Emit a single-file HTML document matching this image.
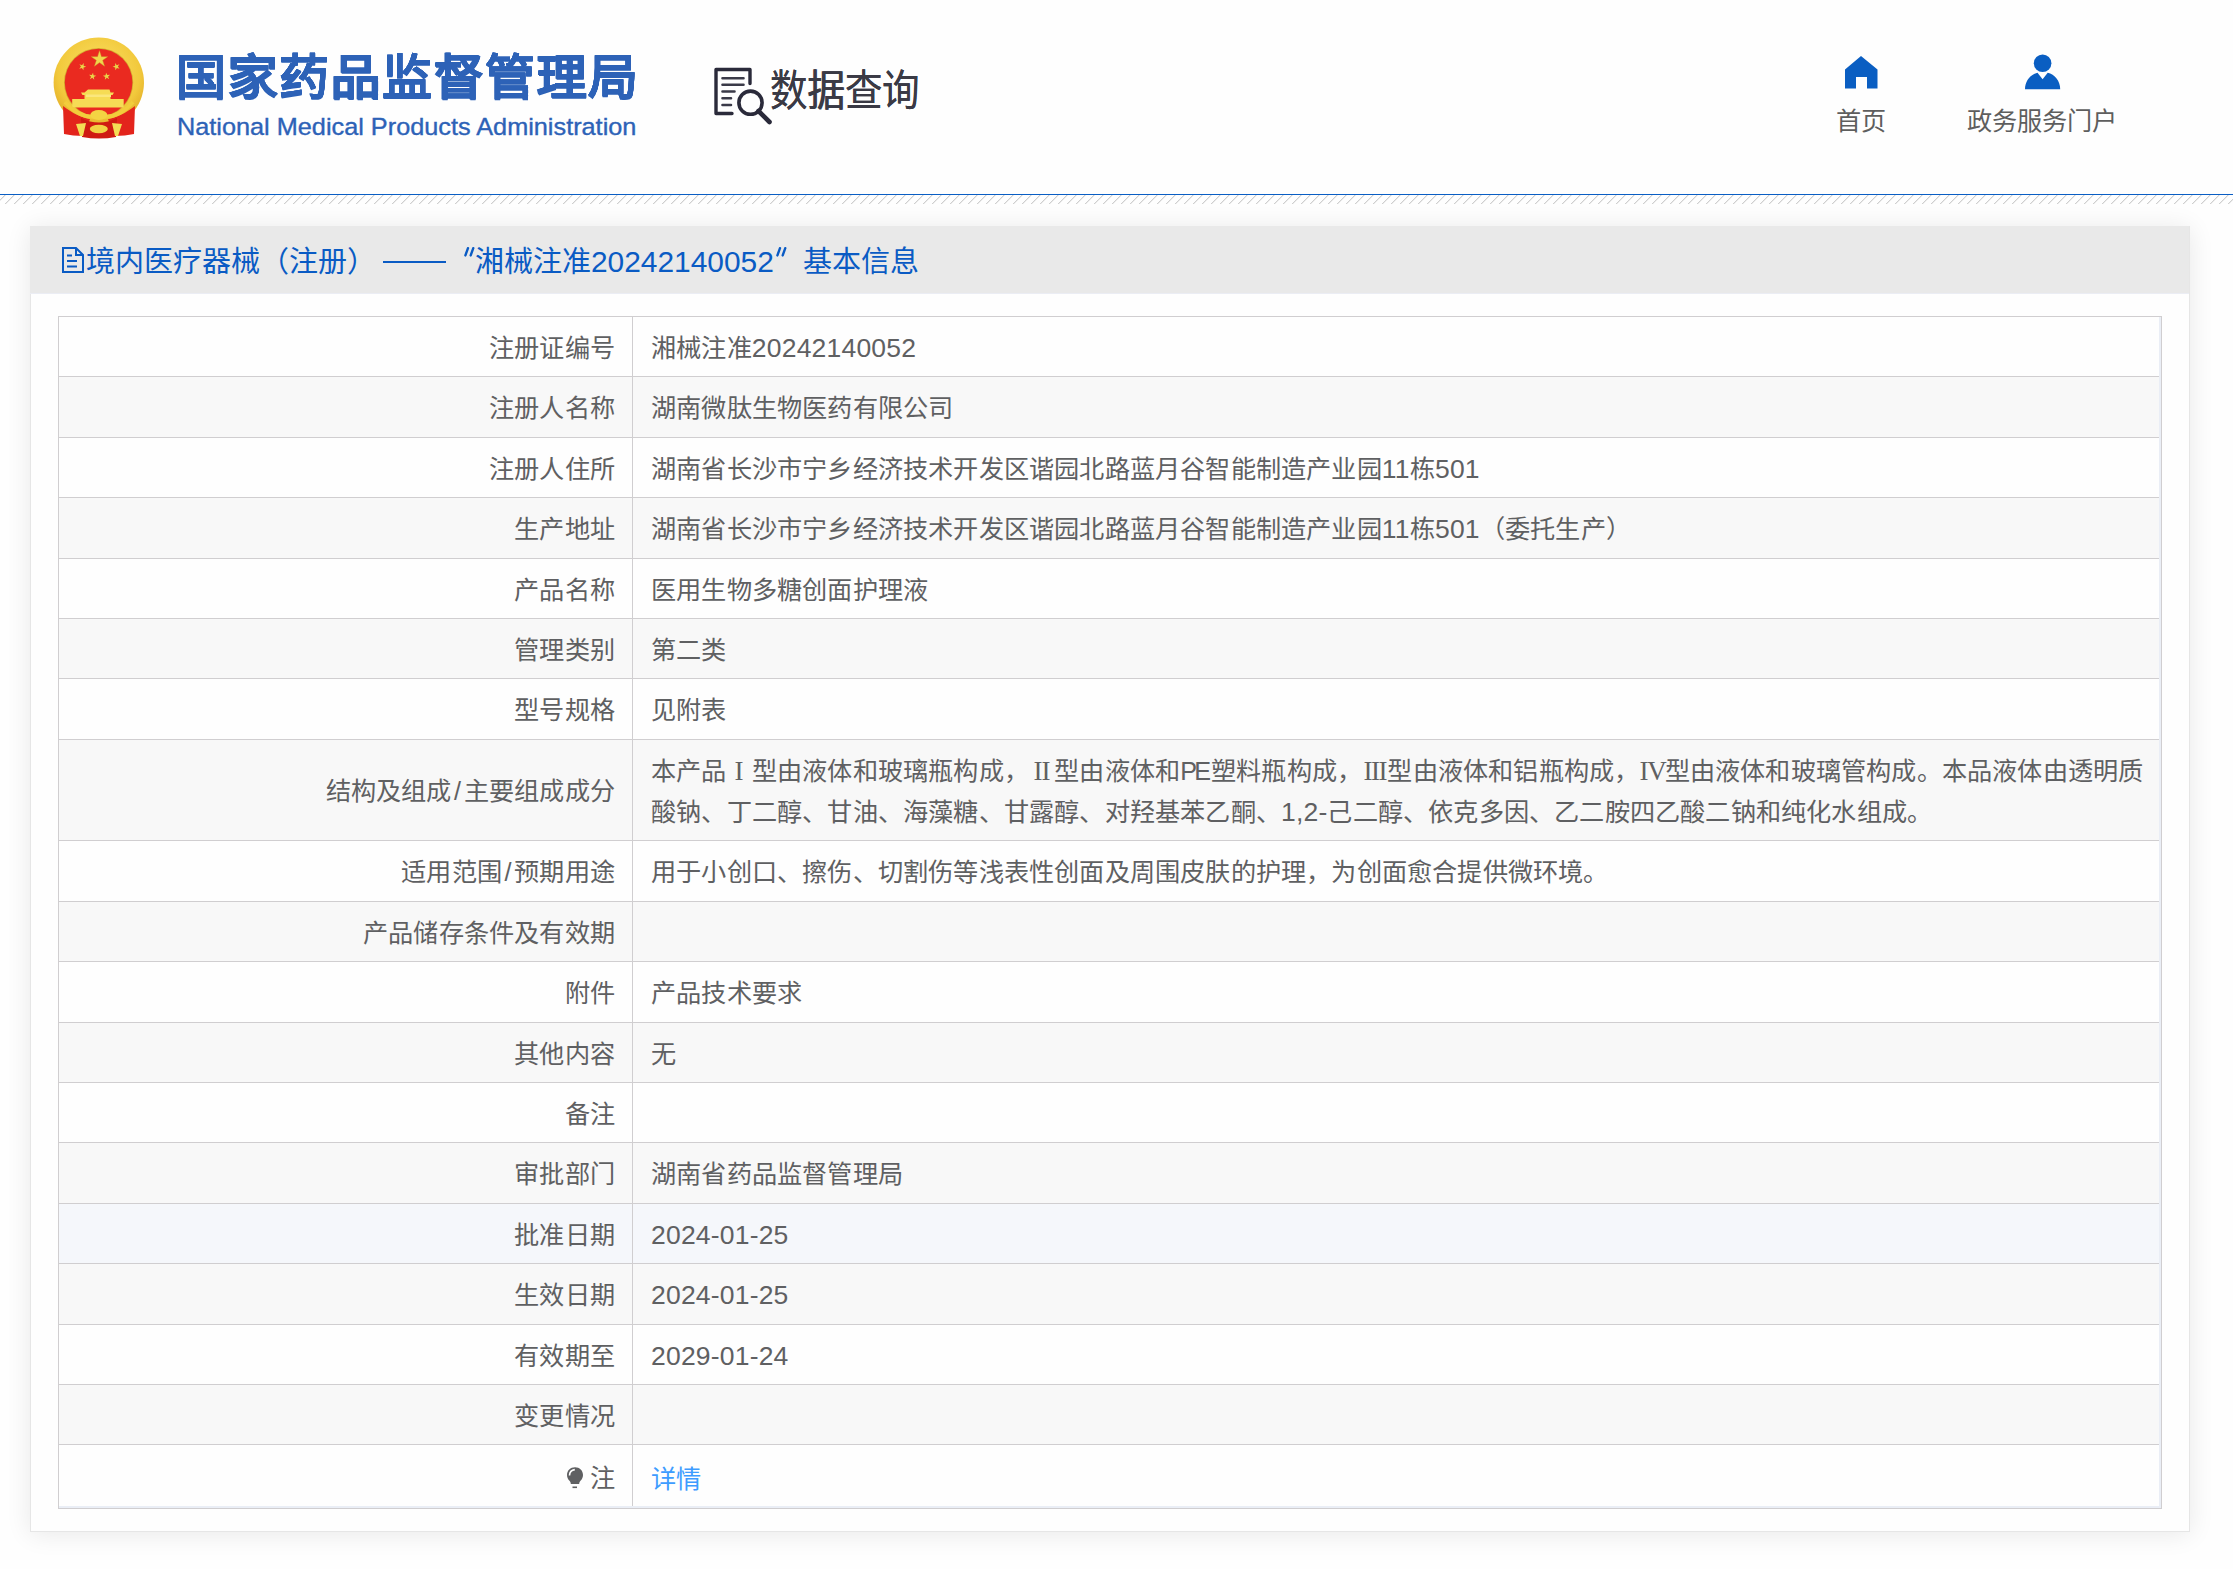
<!DOCTYPE html>
<html lang="zh-CN"><head><meta charset="utf-8">
<style>
html,body{margin:0;padding:0;background:#fefefe;}
body{width:2233px;height:1569px;overflow:hidden;position:relative;font-family:"Liberation Sans",sans-serif;}
.abs{position:absolute;}
#hline{position:absolute;left:0;top:194px;width:2233px;height:1px;background:#0a5ec4;}
#panel{position:absolute;left:30px;top:226px;width:2160px;height:1306px;box-sizing:border-box;border:1px solid #e6e6e6;background:#fefefe;box-shadow:0 2px 24px rgba(0,0,0,0.09);}
#ptitle{position:absolute;left:30px;top:226px;width:2159px;height:67px;background:#e9e9e9;border-bottom:1px solid #ebedf4;}
.tt{position:absolute;top:242px;height:40px;line-height:40px;font-size:29px;color:#0a5bc4;white-space:nowrap;}
.row{position:absolute;left:59px;width:2100px;}
.hl{position:absolute;left:58px;width:2101px;height:1px;background:#d0ced0;}
#vl{position:absolute;left:632px;top:316px;width:1px;height:1192px;background:#d0ced0;}
#tb{position:absolute;left:58px;top:316px;width:2102px;height:1191px;border:1px solid #d0ced0;box-sizing:content-box;}
.lab{position:absolute;right:1618px;height:40px;line-height:40px;font-size:25.2px;letter-spacing:0.2px;color:#5f6062;white-space:nowrap;text-align:right;}
.val{position:absolute;left:651px;height:40px;line-height:40px;font-size:25.2px;letter-spacing:0.2px;color:#5f6062;white-space:nowrap;}
.n{font-size:26.5px;letter-spacing:0.2px;}
.rn{font-family:"Liberation Serif",serif;display:inline-block;width:25.2px;text-align:center;font-size:27px;}
.lnk{color:#3d9cff;position:relative;top:1px}
.bulb{vertical-align:-3px;margin-right:4px;position:relative;left:-2px}
.nav{position:absolute;font-size:25.2px;color:#5e5e5e;white-space:nowrap;line-height:30px;}
</style></head><body>
<div class='abs' style='left:0;top:0;width:2233px;height:194px;background:#fefefe'></div>

<svg class='abs' style='left:48px;top:32px' width='104' height='110' viewBox='0 0 104 110'>
 <defs>
  <radialGradient id='gold' cx='50%' cy='40%' r='60%'><stop offset='0' stop-color='#fbe46a'/><stop offset='0.75' stop-color='#f2c93c'/><stop offset='1' stop-color='#e2ad28'/></radialGradient>
 </defs>
 <circle cx='50.8' cy='50.6' r='45.2' fill='url(#gold)'/>
 <circle cx='50.6' cy='50.5' r='34.6' fill='#b98a1c' opacity='0.55'/>
 <circle cx='50.6' cy='50.5' r='33.8' fill='#ea2a20'/>
 <polygon fill='#f1d64c' stroke='#c9a42a' stroke-width='0.4' points='51.50,18.70 53.43,24.64 59.68,24.64 54.62,28.32 56.55,34.26 51.50,30.59 46.45,34.26 48.38,28.32 43.32,24.64 49.57,24.64'/>
 <g fill='#e9d448'>
  <polygon points='35.70,31.03 35.60,33.79 38.20,34.73 35.54,35.49 35.45,38.25 33.90,35.96 31.25,36.72 32.95,34.55 31.41,32.26 34.00,33.20'/><polygon points='67.10,31.03 68.80,33.20 71.39,32.26 69.85,34.55 71.55,36.72 68.90,35.96 67.35,38.25 67.26,35.49 64.60,34.73 67.20,33.79'/><polygon points='45.03,40.64 45.51,43.36 48.24,43.74 45.80,45.04 46.28,47.76 44.30,45.84 41.86,47.13 43.07,44.65 41.08,42.73 43.82,43.12'/><polygon points='58.07,40.64 59.28,43.12 62.02,42.73 60.03,44.65 61.24,47.13 58.80,45.84 56.82,47.76 57.30,45.04 54.86,43.74 57.59,43.36'/>
 </g>
 <path fill='#f6dc55' d='M40 57.5h21.5l1 3h3.5l-1.5 2.5h-2v4h13.2v8.5H24.2v-8.5h12.3v-4h-2l-1.5-2.5h3.5z'/>
 <path fill='#fbe77c' d='M38 62.5h25v2.5H38z'/>
 <path fill='#e3241c' d='M15 74 C24 81 34 86 42 87 L36 104 C28 104 22 103 16 102 Z'/>
 <path fill='#e3241c' d='M87 74 C78 81 68 86 60 87 L66 104 C74 104 80 103 86 102 Z'/>
 <path fill='#cf1a12' d='M33 86 Q51 95 69 86 L68 105 Q51 108 34 105 Z'/>
 <path fill='none' stroke='#f2cd3c' stroke-width='4' d='M17 70 Q33 88 51 84 Q69 88 85 70'/>
 <ellipse cx='50.8' cy='83' rx='8.5' ry='5' fill='#f4d443'/>
 <path fill='#f4dd55' d='M28 92 L38 91 L35 104 L32 104 Z M74 92 L64 91 L67 104 L70 104 Z'/>
 <ellipse cx='50.8' cy='97' rx='9' ry='4.2' fill='#f2d245'/>
</svg>

<div class='abs' style='left:176px;top:49.5px;font-size:50px;font-weight:900;transform:scaleY(0.945);transform-origin:0 0;text-shadow:0.45px 0 0 #2d62b7,-0.45px 0 0 #2d62b7,0 0.45px 0 #2d62b7,0 -0.45px 0 #2d62b7;color:#2d62b7;line-height:60px;white-space:nowrap;letter-spacing:1.5px'>国家药品监督管理局</div>
<div class='abs' style='left:177px;top:111.5px;font-size:23.7px;color:#2d62b7;line-height:30px;white-space:nowrap;transform:scaleX(1.067);transform-origin:0 0;-webkit-text-stroke:0.35px #2d62b7'>National Medical Products Administration</div>
<svg class='abs' style='left:708px;top:62px' width='70' height='66' viewBox='0 0 70 66'>
 <path d='M24 51.5H8V7.5h34v14' fill='none' stroke='#2a2a3a' stroke-width='3.4' stroke-linejoin='round' stroke-linecap='round'/>
 <g stroke='#3a3a48' stroke-width='2.6' stroke-linecap='round'><path d='M14.5 16.2h21M14.5 22.7h21M14.5 29.5h12M14.5 36.2h8.5M14.5 43h8.5'/></g>
 <circle cx='42.5' cy='40.7' r='11.6' fill='none' stroke='#2a2a3a' stroke-width='3.6'/>
 <path d='M50.5 49l11 11' stroke='#2a2a3a' stroke-width='4.6' stroke-linecap='round'/>
</svg>
<div class='abs' style='left:770px;top:65px;font-size:43.2px;color:#3a3a45;text-shadow:0.3px 0 0 #3a3a45;line-height:52px;white-space:nowrap;transform:scaleX(0.869);transform-origin:0 0'>数据查询</div>
<svg class='abs' style='left:1845px;top:56px' width='33' height='33' viewBox='0 0 33 33'><path d='M16 0L32.5 13.5V32.5H22V21H11V32.5H0V13.5Z' fill='#0a5ec2'/></svg>
<svg class='abs' style='left:2025px;top:54px' width='36' height='36' viewBox='0 0 36 36'><circle cx='17.6' cy='9.3' r='8.8' fill='#0a5ec2'/><path d='M0 35.2C0 27 5.5 20.2 12.5 18.7L17.6 25.3L22.7 18.7C29.7 20.2 35.2 27 35.2 35.2Z' fill='#0a5ec2'/></svg>
<div class='nav' style='left:1836px;top:105.5px'>首页</div>
<div class='nav' style='left:1967px;top:105.5px'>政务服务门户</div>
<div id='hline'></div>
<svg class='abs' style='left:0;top:195px' width='2233' height='9'>
 <defs><pattern id='st' width='9' height='9' patternUnits='userSpaceOnUse'><g><rect x='4' y='0' width='1' height='1' fill='#cfcfcf'/><rect x='5' y='0' width='1' height='1' fill='#ececec'/><rect x='3' y='1' width='1' height='1' fill='#cfcfcf'/><rect x='4' y='1' width='1' height='1' fill='#ececec'/><rect x='2' y='2' width='1' height='1' fill='#cfcfcf'/><rect x='3' y='2' width='1' height='1' fill='#ececec'/><rect x='1' y='3' width='1' height='1' fill='#cfcfcf'/><rect x='2' y='3' width='1' height='1' fill='#ececec'/><rect x='0' y='4' width='1' height='1' fill='#cfcfcf'/><rect x='1' y='4' width='1' height='1' fill='#ececec'/><rect x='8' y='5' width='1' height='1' fill='#cfcfcf'/><rect x='0' y='5' width='1' height='1' fill='#ececec'/><rect x='7' y='6' width='1' height='1' fill='#cfcfcf'/><rect x='8' y='6' width='1' height='1' fill='#ececec'/><rect x='6' y='7' width='1' height='1' fill='#cfcfcf'/><rect x='7' y='7' width='1' height='1' fill='#ececec'/><rect x='5' y='8' width='1' height='1' fill='#cfcfcf'/><rect x='6' y='8' width='1' height='1' fill='#ececec'/></g></pattern></defs>
 <rect width='2233' height='9' fill='url(#st)' shape-rendering='crispEdges'/>
</svg>
<div id='panel'></div>
<div id='ptitle'></div>
<svg class='abs' style='left:60px;top:245px' width='26' height='30' viewBox='0 0 26 30'>
 <path d='M3 3H16L23 10V27H3Z' fill='none' stroke='#0a5bc4' stroke-width='2'/>
 <path d='M16 3V10H23' fill='none' stroke='#0a5bc4' stroke-width='2'/>
 <path d='M7 10.5h5M7 16h10M7 21.5h10' stroke='#0a5bc4' stroke-width='2'/>
</svg>
<div class='tt' style='left:86px'>境内医疗器械（注册）</div>
<div class='abs' style='left:383px;top:261px;width:63px;height:2px;background:#0a5bc4'></div>
<div class='tt' style='left:475px'>湘械注准<span style='font-size:29.9px;letter-spacing:0px'>20242140052</span></div>
<svg class='abs' style='left:462px;top:247px' width='14' height='10' viewBox='0 0 14 10'><path d='M6 1.2L3.4 8.4M11.3 1.2L8.7 8.4' stroke='#0a5bc4' stroke-width='2.4' stroke-linecap='round'/></svg>
<svg class='abs' style='left:774px;top:247px' width='14' height='10' viewBox='0 0 14 10'><path d='M6 1.2L3.4 8.4M11.3 1.2L8.7 8.4' stroke='#0a5bc4' stroke-width='2.4' stroke-linecap='round'/></svg>
<div class='tt' style='left:803px'>基本信息</div>
<div id='tb'></div>
<div class='row' style='top:317px;height:59px;background:#fefefe'></div><div class='hl' style='top:316px'></div><div class='lab' style='top:327.5px'>注册证编号</div><div class='val' style='top:327.5px'>湘械注准<span class='n'>20242140052</span></div><div class='row' style='top:377px;height:60px;background:#f8f8f8'></div><div class='hl' style='top:376px'></div><div class='lab' style='top:388.0px'>注册人名称</div><div class='val' style='top:388.0px'>湖南微肽生物医药有限公司</div><div class='row' style='top:438px;height:59px;background:#fefefe'></div><div class='hl' style='top:437px'></div><div class='lab' style='top:448.5px'>注册人住所</div><div class='val' style='top:448.5px'>湖南省长沙市宁乡经济技术开发区谐园北路蓝月谷智能制造产业园<span class='n'>11</span>栋<span class='n'>501</span></div><div class='row' style='top:498px;height:60px;background:#f8f8f8'></div><div class='hl' style='top:497px'></div><div class='lab' style='top:509.0px'>生产地址</div><div class='val' style='top:509.0px'>湖南省长沙市宁乡经济技术开发区谐园北路蓝月谷智能制造产业园<span class='n'>11</span>栋<span class='n'>501</span>（委托生产）</div><div class='row' style='top:559px;height:59px;background:#fefefe'></div><div class='hl' style='top:558px'></div><div class='lab' style='top:569.5px'>产品名称</div><div class='val' style='top:569.5px'>医用生物多糖创面护理液</div><div class='row' style='top:619px;height:59px;background:#f8f8f8'></div><div class='hl' style='top:618px'></div><div class='lab' style='top:629.5px'>管理类别</div><div class='val' style='top:629.5px'>第二类</div><div class='row' style='top:679px;height:60px;background:#fefefe'></div><div class='hl' style='top:678px'></div><div class='lab' style='top:690.0px'>型号规格</div><div class='val' style='top:690.0px'>见附表</div><div class='row' style='top:740px;height:100px;background:#f8f8f8'></div><div class='hl' style='top:739px'></div><div class='lab' style='top:771.0px'>结构及组成<span style='margin:0 2.5px'>/</span>主要组成成分</div><div class='val' style='top:750.5px'>本产品<span class='rn'>I</span>型由液体和玻璃瓶构成，<span class='rn' style=letter-spacing:-1px>II</span>型由液体和<span style='letter-spacing:-2.8px;margin-right:2.8px'>PE</span>塑料瓶构成，<span class='rn' style=letter-spacing:-1.5px>III</span>型由液体和铝瓶构成，<span class='rn' style=letter-spacing:-1px>IV</span>型由液体和玻璃管构成。本品液体由透明质</div><div class='val' style='top:791.6px'>酸钠、丁二醇、甘油、海藻糖、甘露醇、对羟基苯乙酮、<span class='n'>1,2-</span>己二醇、依克多因、乙二胺四乙酸二钠和纯化水组成。</div><div class='row' style='top:841px;height:60px;background:#fefefe'></div><div class='hl' style='top:840px'></div><div class='lab' style='top:852.0px'>适用范围<span style='margin:0 2.5px'>/</span>预期用途</div><div class='val' style='top:852.0px'>用于小创口、擦伤、切割伤等浅表性创面及周围皮肤的护理，为创面愈合提供微环境。</div><div class='row' style='top:902px;height:59px;background:#f8f8f8'></div><div class='hl' style='top:901px'></div><div class='lab' style='top:912.5px'>产品储存条件及有效期</div><div class='row' style='top:962px;height:60px;background:#fefefe'></div><div class='hl' style='top:961px'></div><div class='lab' style='top:973.0px'>附件</div><div class='val' style='top:973.0px'>产品技术要求</div><div class='row' style='top:1023px;height:59px;background:#f8f8f8'></div><div class='hl' style='top:1022px'></div><div class='lab' style='top:1033.5px'>其他内容</div><div class='val' style='top:1033.5px'>无</div><div class='row' style='top:1083px;height:59px;background:#fefefe'></div><div class='hl' style='top:1082px'></div><div class='lab' style='top:1093.5px'>备注</div><div class='row' style='top:1143px;height:60px;background:#f8f8f8'></div><div class='hl' style='top:1142px'></div><div class='lab' style='top:1154.0px'>审批部门</div><div class='val' style='top:1154.0px'>湖南省药品监督管理局</div><div class='row' style='top:1204px;height:59px;background:#f5f7fb'></div><div class='hl' style='top:1203px'></div><div class='lab' style='top:1214.5px'>批准日期</div><div class='val' style='top:1214.5px'><span class='n'>2024-01-25</span></div><div class='row' style='top:1264px;height:60px;background:#f8f8f8'></div><div class='hl' style='top:1263px'></div><div class='lab' style='top:1275.0px'>生效日期</div><div class='val' style='top:1275.0px'><span class='n'>2024-01-25</span></div><div class='row' style='top:1325px;height:59px;background:#fefefe'></div><div class='hl' style='top:1324px'></div><div class='lab' style='top:1335.5px'>有效期至</div><div class='val' style='top:1335.5px'><span class='n'>2029-01-24</span></div><div class='row' style='top:1385px;height:59px;background:#f8f8f8'></div><div class='hl' style='top:1384px'></div><div class='lab' style='top:1395.5px'>变更情况</div><div class='row' style='top:1445px;height:63px;background:#fefefe'></div><div class='hl' style='top:1444px'></div><div class='lab' style='top:1457.5px'><svg class='bulb' width='18' height='24' viewBox='0 0 18 24'><path d='M9 1.2C4.4 1.2 1 4.6 1 8.9c0 2.6 1.1 4.3 2.5 5.8c0.8 0.9 1.3 1.8 1.3 3.2h8.4c0-1.4 0.5-2.3 1.3-3.2c1.4-1.5 2.5-3.2 2.5-5.8C17 4.6 13.6 1.2 9 1.2z' fill='#5f6062'/><path d='M3.5 9.5C3.6 6.2 5.8 4 8.8 3.6' stroke='#fff' stroke-width='1.6' fill='none'/><rect x='6.5' y='20.5' width='4.5' height='1.6' fill='#5f6062'/></svg>注</div><div class='val' style='top:1457.5px'><span class='lnk'>详情</span></div>
<div id='vl'></div>
<div class='abs' style='left:2159px;top:317px;width:2px;height:1191px;background:#eaeef6'></div>
<div class='abs' style='left:59px;top:1506px;width:2102px;height:2px;background:#eaeef6'></div>
</body></html>
